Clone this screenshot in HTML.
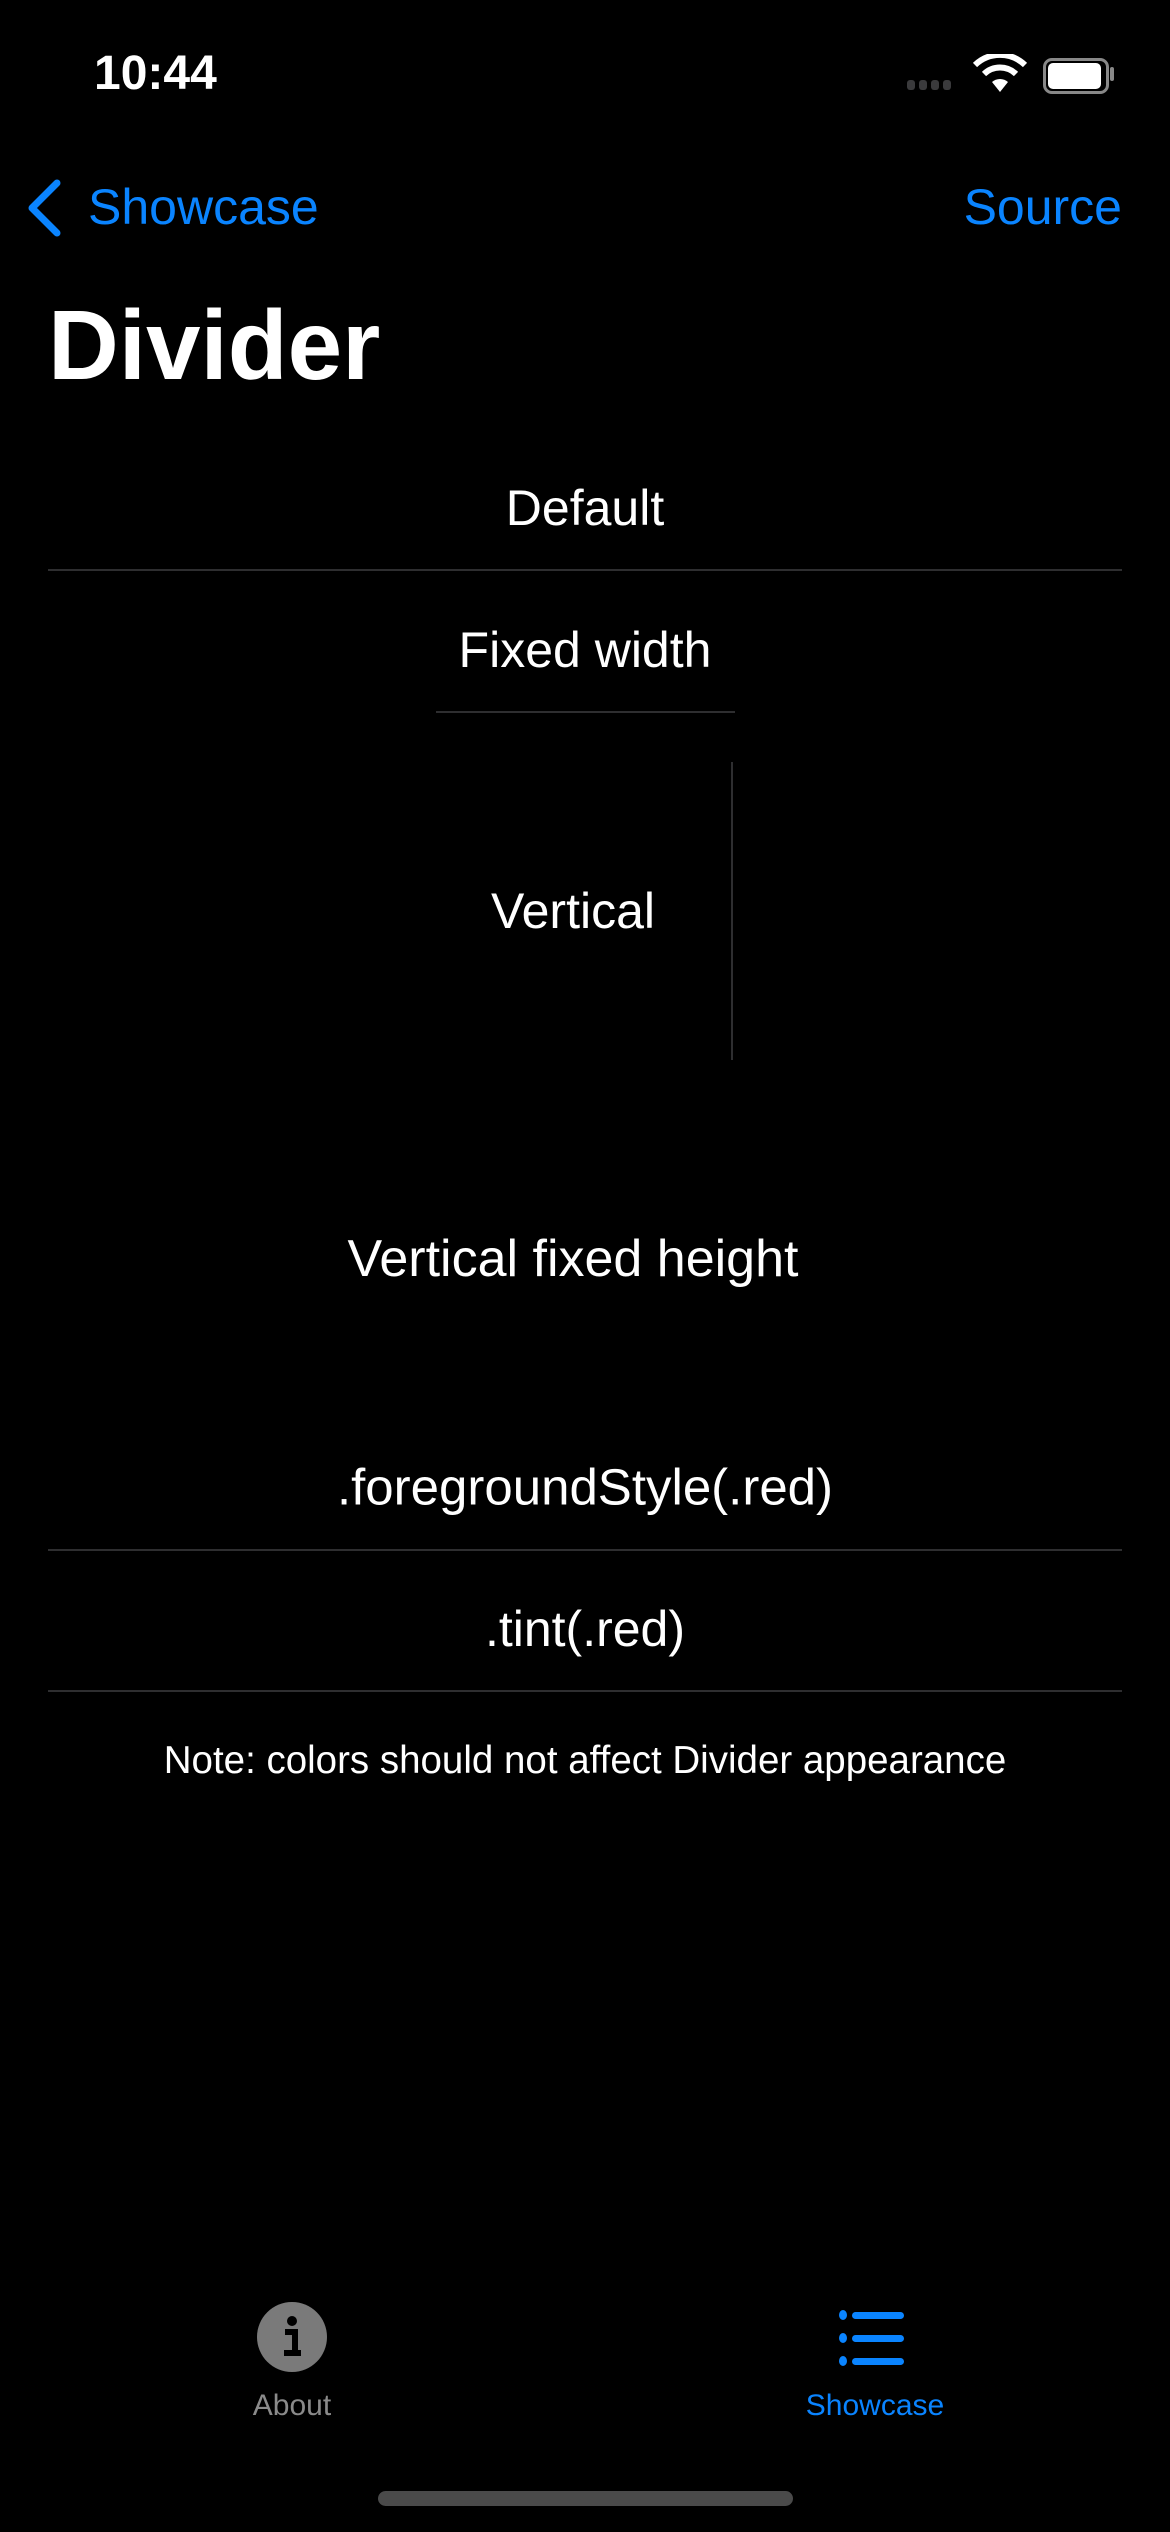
<!DOCTYPE html>
<html><head><meta charset="utf-8"><style>
body{margin:0;background:#000;width:1170px;height:2532px;position:relative;overflow:hidden;font-family:"Liberation Sans",sans-serif;color:#fff}
.t{position:absolute;white-space:nowrap;line-height:1}
.c{transform:translate(-50%,-50%)}
.line{position:absolute;background:#2e2e30;height:2px}
.blue{color:#0a84ff}
</style></head><body>
<div class="t" style="left:94px;top:50px;font-size:48px;font-weight:bold">10:44</div>
<div style="position:absolute;left:907px;top:80px">
<span style="position:absolute;left:0;width:8px;height:10px;border-radius:3px;background:#3a3a3c"></span>
<span style="position:absolute;left:12px;width:8px;height:10px;border-radius:3px;background:#3a3a3c"></span>
<span style="position:absolute;left:24px;width:8px;height:10px;border-radius:3px;background:#3a3a3c"></span>
<span style="position:absolute;left:36px;width:8px;height:10px;border-radius:3px;background:#3a3a3c"></span>
</div>
<svg style="position:absolute;left:972px;top:54px" width="56" height="40" viewBox="0 0 56 40"><path d="M28 38 L20 28 A12 12 0 0 1 36 28 Z" fill="#fff"/><path d="M12 20 A23 23 0 0 1 44 20" stroke="#fff" stroke-width="6" fill="none"/><path d="M3 11 A36 36 0 0 1 53 11" stroke="#fff" stroke-width="6" fill="none"/></svg>
<div style="position:absolute;left:1043px;top:58px;width:60px;height:30px;border:3px solid #888;border-radius:9px"></div>
<div style="position:absolute;left:1048px;top:63px;width:53px;height:26px;background:#fff;border-radius:5px"></div>
<div style="position:absolute;left:1110px;top:67px;width:4px;height:14px;background:#888;border-radius:2px"></div>
<svg style="position:absolute;left:24px;top:178px" width="40" height="60" viewBox="0 0 40 60"><path d="M33 5 L8 30 L33 55" stroke="#0a84ff" stroke-width="7" fill="none" stroke-linecap="round" stroke-linejoin="round"/></svg>
<div class="t blue" style="left:88px;top:182px;font-size:50px">Showcase</div>
<div class="t blue" style="right:48px;top:182px;font-size:50px">Source</div>
<div class="t" style="left:48px;top:296px;font-size:98px;font-weight:bold">Divider</div>
<div class="t c" style="left:585px;top:508px;font-size:50px">Default</div>
<div class="line" style="left:48px;width:1074px;top:569px"></div>
<div class="t c" style="left:585px;top:650px;font-size:50px">Fixed width</div>
<div class="line" style="left:436px;width:299px;top:711px"></div>
<div class="t c" style="left:573px;top:911px;font-size:50px">Vertical</div>
<div style="position:absolute;left:731px;top:762px;width:2px;height:298px;background:#2e2e30"></div>
<div class="t c" style="left:573px;top:1259px;font-size:52px">Vertical fixed height</div>
<div class="t c" style="left:585px;top:1487px;font-size:51px">.foregroundStyle(.red)</div>
<div class="line" style="left:48px;width:1074px;top:1549px"></div>
<div class="t c" style="left:585px;top:1629px;font-size:50px">.tint(.red)</div>
<div class="line" style="left:48px;width:1074px;top:1690px"></div>
<div class="t c" style="left:585px;top:1761px;font-size:38.5px">Note: colors should not affect Divider appearance</div>
<svg style="position:absolute;left:257px;top:2302px" width="70" height="70" viewBox="0 0 70 70"><circle cx="35" cy="35" r="35" fill="#7a7a7a"/><circle cx="35" cy="19" r="5" fill="#000"/><path d="M28 30 H38 V50 M27 51 H44" stroke="#000" stroke-width="6" fill="none"/></svg>
<div class="t c" style="left:292px;top:2406px;font-size:30px;color:#8a8a8a">About</div>
<svg style="position:absolute;left:838px;top:2310px" width="74" height="56" viewBox="0 0 74 56"><g fill="#0a84ff"><ellipse cx="5" cy="5" rx="4" ry="5"/><ellipse cx="5" cy="28" rx="4" ry="5"/><ellipse cx="5" cy="51" rx="4" ry="5"/><rect x="14" y="2" width="52" height="7" rx="3.5"/><rect x="14" y="25" width="52" height="7" rx="3.5"/><rect x="14" y="48" width="52" height="7" rx="3.5"/></g></svg>
<div class="t c blue" style="left:875px;top:2406px;font-size:30px">Showcase</div>
<div style="position:absolute;left:378px;top:2491px;width:415px;height:15px;border-radius:8px;background:#4a4a4a"></div>
</body></html>
